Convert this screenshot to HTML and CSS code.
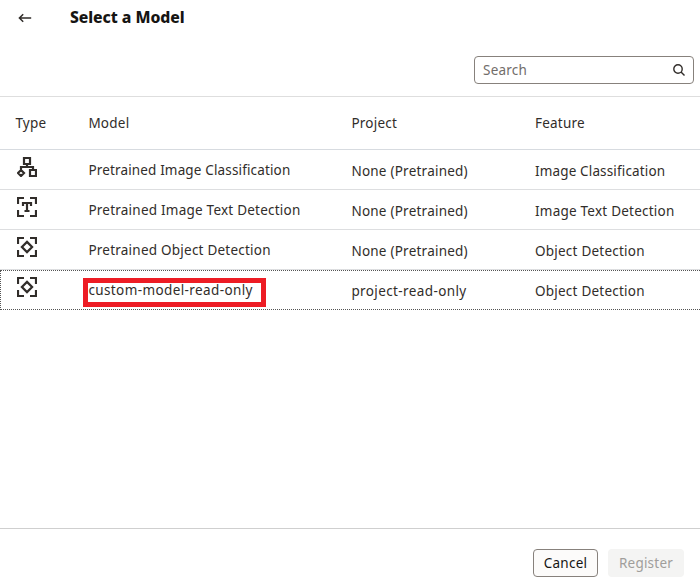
FILE: index.html
```html
<!DOCTYPE html>
<html lang="en">
<head>
<meta charset="utf-8">
<title>Select a Model</title>
<link rel="stylesheet" href="styles.css">
</head>
<body>
<svg class="defs" width="0" height="0">
  <symbol id="detect" viewBox="0 0 20 20">
    <path d="M1 7V1H7M13 1H19V7M19 13V19H13M7 19H1V13"/><path d="M10 4.9L15.1 10L10 15.1L4.9 10Z"/>
  </symbol>
</svg>
<div class="panel">
  <header class="head">
    <svg class="back" viewBox="0 0 14 10"><path d="M13.2 5H1.5M5.2 1.2L1.4 5L5.2 8.8"/></svg>
    <h1>Select a Model</h1>
  </header>
  <div class="toolbar">
    <div class="search"><span>Search</span>
      <svg class="glass" viewBox="0 0 12 12"><circle cx="5" cy="5" r="4.2"/><path d="M8 8L11.5 11.5"/></svg>
    </div>
  </div>
  <div class="table">
    <div class="row labels"><span>Type</span><span>Model</span><span>Project</span><span>Feature</span></div>
    <div class="row">
      <svg class="icon" viewBox="0 0 20 20"><path d="M7 1H13V7H7ZM10 7V10M4 13V10H16V13M13 13H19V19H13ZM4 13L7 16L4 19L1 16Z"/></svg>
      <span class="model snug">Pretrained Image Classification</span><span>None (Pretrained)</span><span class="snug">Image Classification</span>
    </div>
    <div class="row">
      <svg class="icon" viewBox="0 0 20 20"><path d="M1 7V1H7M13 1H19V7M19 13V19H13M7 19H1V13"/><path d="M6 9V6H14V9M10 6V14M7.5 14H12.5"/></svg>
      <span class="model">Pretrained Image Text Detection</span><span>None (Pretrained)</span><span>Image Text Detection</span>
    </div>
    <div class="row">
      <svg class="icon"><use href="#detect"/></svg>
      <span class="model">Pretrained Object Detection</span><span>None (Pretrained)</span><span>Object Detection</span>
    </div>
    <div class="row focused">
      <svg class="icon"><use href="#detect"/></svg>
      <span class="model marked slug">custom-model-read-only</span><span class="slug">project-read-only</span><span>Object Detection</span>
    </div>
  </div>
  <footer class="foot">
    <button class="cancel">Cancel</button><button class="register" disabled>Register</button>
  </footer>
</div>
</body>
</html>
```

FILE: styles.css
```css
*, ::after { box-sizing: border-box; }
body { margin: 0; background: #fff; color: #312d2a; font: 13.5px/20px "Noto Sans", "Open Sans", sans-serif; letter-spacing: .23px; }
.defs { position: absolute; }
svg { fill: none; stroke: #312d2a; stroke-width: 2; }
.panel { width: 700px; height: 586px; display: flex; flex-direction: column; }
.head { height: 36px; display: flex; padding: 7px 0 0 18px; }
.back { width: 14px; height: 10px; margin-top: 6px; stroke-width: 1.5; }
h1 { margin: 0 0 0 38px; color: #161513; font-size: 15.75px; line-height: 20px; font-weight: 800; letter-spacing: -.06px; }
.toolbar { height: 61px; padding: 20px 6px 0 0; display: flex; justify-content: flex-end; border-bottom: 1px solid #dedede; }
.search { width: 220px; height: 28px; display: flex; align-items: center; justify-content: space-between; padding: 0 8px; border: 1px solid #87817c; border-radius: 4px; color: #716d6a; }
.glass { width: 12px; height: 12px; stroke-width: 1.4; }
.row { height: 40px; display: grid; grid-template-columns: 73px 263px 183.6px 1fr; padding-left: 15.4px; border-bottom: 1px solid #dddee0; }
.row > span { padding-top: 11px; white-space: nowrap; }
.row > .model { padding-top: 10px; }
.row > .slug { letter-spacing: .39px; }
.row > .snug { letter-spacing: .15px; }
.row.labels { height: 53px; border-color: #d7dbe0; }
.row.labels > span { padding-top: 16px; }
.icon { width: 20px; height: 20px; margin: 7px 0 0 1.6px; stroke-width: 2.2; }
.row.focused { padding-left: 14.4px; border: 1px dotted #555; border-right: 0; }
.focused > .icon { margin-top: 6px; }
.focused > span { padding-top: 10px; }
.row > .marked { position: relative; padding-top: 9px; }
.marked::after { content: ""; position: absolute; left: -5.4px; top: 7px; width: 183px; height: 29px; border: 5px solid #ed1c24; }
.foot { height: 58px; margin-top: auto; padding: 20px 16px 0 0; display: flex; gap: 10px; justify-content: flex-end; border-top: 1px solid #cfcfcf; }
button { height: 28px; padding: 0; border-radius: 4px; font: inherit; letter-spacing: inherit; }
.cancel { width: 65px; border: 1px solid #87817c; background: #fcfbfa; color: #161513; }
.register { width: 76px; border: 0; background: #f4f4f3; color: #a09e9b; }
```
